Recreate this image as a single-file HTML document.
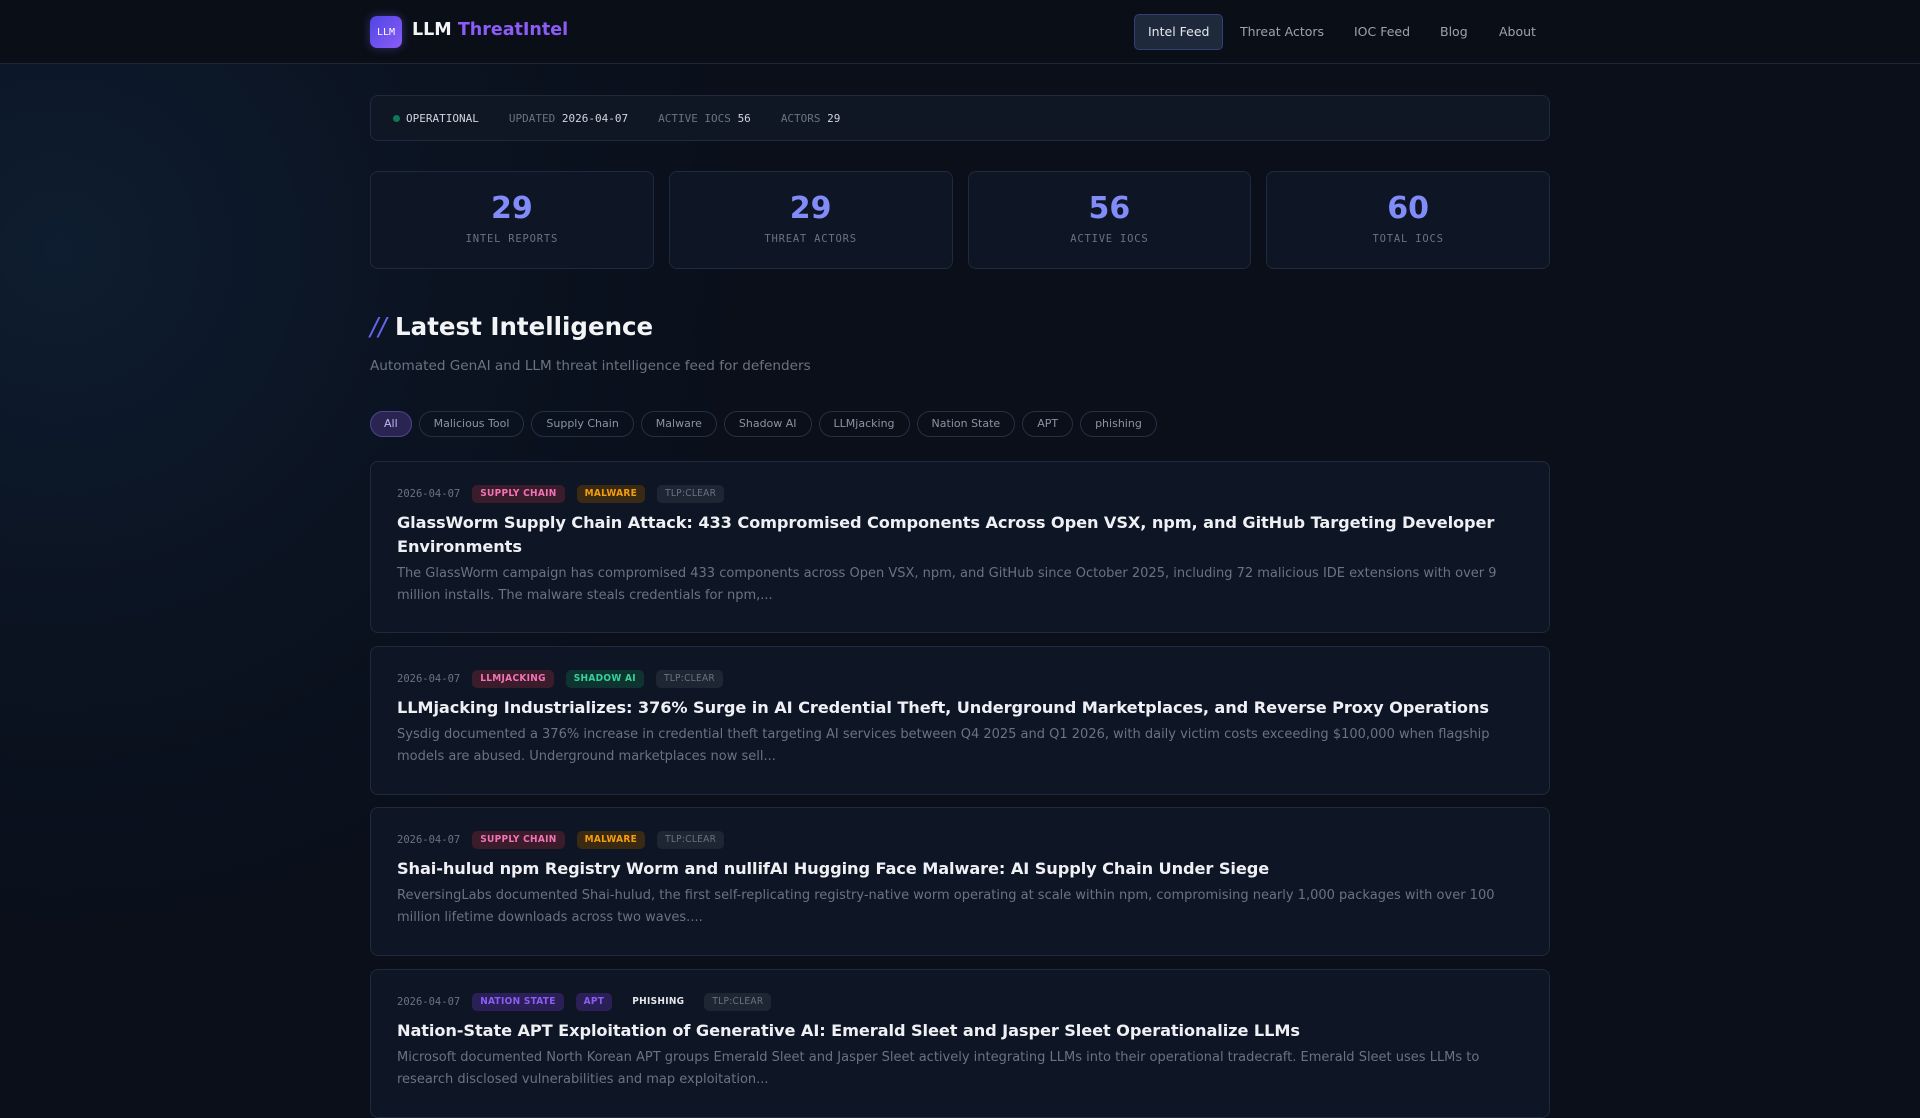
<!DOCTYPE html>
<html><head><meta charset="utf-8"><style>
*{box-sizing:border-box;margin:0;padding:0}
html{background:#0a0f1a}
body{width:1920px;height:1080px;overflow:hidden;background:radial-gradient(ellipse 700px 700px at 60px 250px,#0e1d30 0%,#0b1321 55%,#0a0f1a 100%);font-family:"DejaVu Sans","Liberation Sans",sans-serif;color:#e5e7eb;position:relative}
.mono{font-family:"DejaVu Sans Mono","Liberation Mono",monospace}
header{height:64px;background:#0a0e16;border-bottom:1px solid #1c2738;position:relative}
.logo{position:absolute;left:370px;top:16px;width:32px;height:32px;border-radius:7px;background:linear-gradient(135deg,#4f46e5,#8b5cf6);color:#fff;font-size:10px;display:flex;align-items:center;justify-content:center;box-shadow:0 0 10px rgba(99,102,241,.4)}
.brand{position:absolute;left:412px;top:20px;font-size:17.5px;font-weight:bold;color:#f3f4f6}
.brand span{color:#8b5cf6}
nav a{position:absolute;top:14px;height:36px;line-height:36px;font-size:12.5px;color:#9ca3af;text-decoration:none}
nav a.act{background:#1e293b;border:1px solid #334170;border-radius:5px;color:#e5e7eb;padding:0 13px;line-height:34px}
.wrap{position:absolute;left:370px;width:1180px}
.status{top:95px;height:46px;border:1px solid #1f2a3c;border-radius:8px;background:#0f1624;font-size:11px;display:flex;align-items:center;padding-left:22px;color:#6b7280}
.status b{font-weight:normal;color:#d1d5db}
.dot{width:7px;height:7px;border-radius:50%;background:#10b981;opacity:.6;display:inline-block;margin-right:6px}
.stats{top:171px;display:flex;gap:15px}
.stat{flex:1;height:98px;border:1px solid #1f2a3c;border-radius:8px;background:#0e1524;text-align:center}
.stat .n{font-size:30px;font-weight:bold;color:#818cf8;margin-top:18px;line-height:38px}
.stat .l{font-size:10.5px;color:#6b7280;letter-spacing:.8px;margin-top:5px}
h2{top:312px;font-size:24.5px;font-weight:bold;color:#f3f4f6}
h2 span{color:#6366f1;font-weight:normal;font-style:italic}
.sub{top:358px;font-size:13.6px;color:#6b7280}
.filters{top:411px;display:flex;gap:7px}
.pill{height:26px;line-height:24px;border:1px solid #243044;border-radius:13px;padding:0 14px;font-size:11px;color:#8b93a3}
.pill.on{background:#2a2550;border-color:#4b4690;color:#c4b5fd;padding:0 13px}
.card{border:1px solid #1f2a3c;border-radius:8px;background:#0e1524;padding:23px 26px 0 26px}
.meta{display:flex;align-items:center;gap:12px;font-size:10.5px;height:18px}
.meta .d{color:#6b7280}
.bd{height:18px;line-height:18px;padding:0 8px;border-radius:5px;font-family:"DejaVu Sans Condensed","DejaVu Sans",sans-serif;font-size:10px;font-weight:bold;letter-spacing:.3px}
.sc{background:#3a1c2a;color:#f472b6}
.mw{background:#3a2a14;color:#f59e0b}
.lj{background:#3a1c2a;color:#f472b6}
.sa{background:#0f3330;color:#34d399}
.ns{background:#2a2056;color:#8b5cf6}
.ph{color:#e5e7eb}
.tlp{background:#1e2533;color:#6b7280;font-weight:normal}
.t{font-size:16.2px;font-weight:bold;color:#eef0f4;line-height:24px;margin-top:8px;letter-spacing:-.1px}
.ds{font-size:13px;color:#6b7280;line-height:22px;margin-top:4px}
</style></head><body>
<header>
<div class="logo mono">LLM</div>
<div class="brand">LLM <span>ThreatIntel</span></div>
<nav>
<a class="act" style="left:1134px">Intel Feed</a>
<a style="left:1240px">Threat Actors</a>
<a style="left:1354px">IOC Feed</a>
<a style="left:1440px">Blog</a>
<a style="left:1499px">About</a>
</nav>
</header>
<div class="wrap status mono"><span class="dot"></span><b>OPERATIONAL</b><span style="margin-left:30px">UPDATED <b>2026-04-07</b></span><span style="margin-left:30px">ACTIVE IOCS <b>56</b></span><span style="margin-left:30px">ACTORS <b>29</b></span></div>
<div class="wrap stats">
<div class="stat"><div class="n">29</div><div class="l mono">INTEL REPORTS</div></div>
<div class="stat"><div class="n">29</div><div class="l mono">THREAT ACTORS</div></div>
<div class="stat"><div class="n">56</div><div class="l mono">ACTIVE IOCS</div></div>
<div class="stat"><div class="n">60</div><div class="l mono">TOTAL IOCS</div></div>
</div>
<h2 class="wrap"><span>//</span> Latest Intelligence</h2>
<div class="wrap sub">Automated GenAI and LLM threat intelligence feed for defenders</div>
<div class="wrap filters">
<div class="pill on">All</div><div class="pill">Malicious Tool</div><div class="pill">Supply Chain</div><div class="pill">Malware</div><div class="pill">Shadow AI</div><div class="pill">LLMjacking</div><div class="pill">Nation State</div><div class="pill">APT</div><div class="pill">phishing</div>
</div>
<div class="wrap card" style="top:461px;height:172px">
<div class="meta"><span class="d mono">2026-04-07</span><span class="bd sc">SUPPLY CHAIN</span><span class="bd mw">MALWARE</span><span class="bd tlp">TLP:CLEAR</span></div>
<div class="t">GlassWorm Supply Chain Attack: 433 Compromised Components Across Open VSX, npm, and GitHub Targeting Developer Environments</div>
<div class="ds">The GlassWorm campaign has compromised 433 components across Open VSX, npm, and GitHub since October 2025, including 72 malicious IDE extensions with over 9 million installs. The malware steals credentials for npm,...</div>
</div>
<div class="wrap card" style="top:646px;height:149px">
<div class="meta"><span class="d mono">2026-04-07</span><span class="bd lj">LLMJACKING</span><span class="bd sa">SHADOW AI</span><span class="bd tlp">TLP:CLEAR</span></div>
<div class="t">LLMjacking Industrializes: 376% Surge in AI Credential Theft, Underground Marketplaces, and Reverse Proxy Operations</div>
<div class="ds">Sysdig documented a 376% increase in credential theft targeting AI services between Q4 2025 and Q1 2026, with daily victim costs exceeding $100,000 when flagship models are abused. Underground marketplaces now sell...</div>
</div>
<div class="wrap card" style="top:807px;height:149px">
<div class="meta"><span class="d mono">2026-04-07</span><span class="bd sc">SUPPLY CHAIN</span><span class="bd mw">MALWARE</span><span class="bd tlp">TLP:CLEAR</span></div>
<div class="t">Shai-hulud npm Registry Worm and nullifAI Hugging Face Malware: AI Supply Chain Under Siege</div>
<div class="ds">ReversingLabs documented Shai-hulud, the first self-replicating registry-native worm operating at scale within npm, compromising nearly 1,000 packages with over 100 million lifetime downloads across two waves....</div>
</div>
<div class="wrap card" style="top:969px;height:149px">
<div class="meta"><span class="d mono">2026-04-07</span><span class="bd ns">NATION STATE</span><span class="bd ns">APT</span><span class="bd ph">PHISHING</span><span class="bd tlp">TLP:CLEAR</span></div>
<div class="t">Nation-State APT Exploitation of Generative AI: Emerald Sleet and Jasper Sleet Operationalize LLMs</div>
<div class="ds">Microsoft documented North Korean APT groups Emerald Sleet and Jasper Sleet actively integrating LLMs into their operational tradecraft. Emerald Sleet uses LLMs to research disclosed vulnerabilities and map exploitation...</div>
</div>
</body></html>
